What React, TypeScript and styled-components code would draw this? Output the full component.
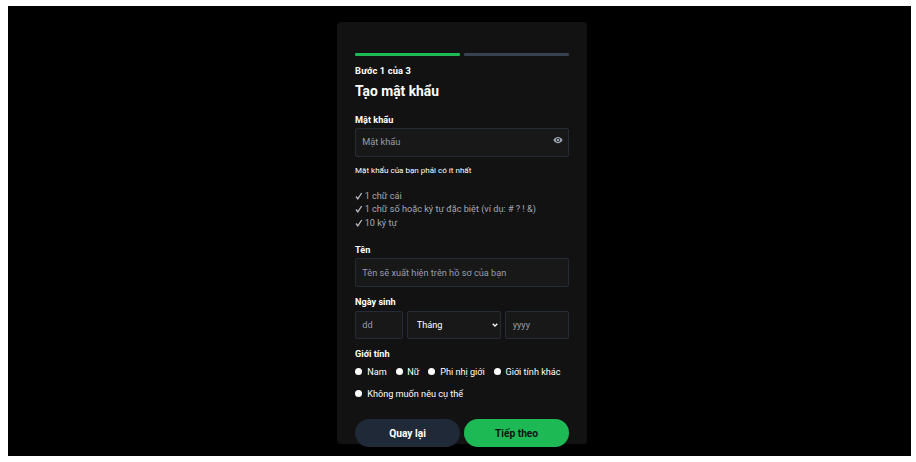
import React from "react";
import styled, { createGlobalStyle } from "styled-components";

const GlobalStyle = createGlobalStyle`
  *, *::before, *::after { box-sizing: border-box; }
  body { margin: 0; background: #fff; font-family: Roboto, sans-serif; }
  input, select, button { font-family: inherit; }
`;

const Frame = styled.div`
  height: 462px;
  padding: 6px 5px 6px 8px;
  overflow: hidden;
`;

const Page = styled.main`
  height: 450px;
  padding: 16px 0 0 329.4px;
  background: #000;
`;

const Card = styled.form`
  display: flex;
  flex-direction: column;
  width: 249.6px;
  height: 421.7px;
  padding: 31px 18px 0 17.7px;
  border-radius: 4px;
  background: #121212;
  color: #fff;
`;

const Progress = styled.div`
  display: grid;
  grid-template-columns: 1fr 1fr;
  gap: 4px;
  flex: none;
`;

const Segment = styled.span<{ $active?: boolean }>`
  height: 2.7px;
  border-radius: 1px;
  background: ${(p) => (p.$active ? "#1db954" : "#374151")};
`;

const Step = styled.p`
  margin: 8.3px 0 0;
  font-size: 9.3px;
  line-height: 14px;
  font-weight: 700;
  letter-spacing: 0.12px;
`;

const Title = styled.h1`
  margin: 3px 0 0;
  font-size: 13.8px;
  line-height: 20px;
  font-weight: 700;
`;

const Group = styled.section<{ $top: number }>`
  display: flex;
  flex-direction: column;
  flex: none;
  margin-top: ${(p) => p.$top}px;
`;

const Label = styled.label`
  font-size: 9.15px;
  line-height: 14px;
  font-weight: 700;
`;

const Field = styled.div`
  display: flex;
  align-items: center;
  height: 28.2px;
  margin-top: 1.9px;
  padding: 0 5px 0 6.2px;
  border: 1px solid #252b37;
  border-radius: 2px;
  background: #181818;
`;

const PasswordField = styled(Field)`
  margin-top: 1.4px;
`;

const Input = styled.input`
  flex: 1;
  min-width: 0;
  width: 100%;
  padding: 0;
  border: 0;
  outline: 0;
  background: transparent;
  color: #fff;
  font-size: 9.2px;
  line-height: 14px;
  &::placeholder { color: #959eac; opacity: 1; }
`;

const EyeIcon = styled.svg`
  width: 10px;
  height: 10px;
  margin-top: -5px;
  fill: #9ca3af;
`;

const Hint = styled.p`
  margin: 7px 0 0;
  font-size: 8.05px;
  line-height: 14px;
  font-weight: 400;
`;

const Rules = styled.ul`
  margin: 11.8px 0 0;
  padding: 0;
  list-style: none;
`;

const Rule = styled.li`
  display: flex;
  align-items: center;
  gap: 1.6px;
  height: 13.35px;
  color: #a3aab5;
  font-size: 9.13px;
`;

const Check = styled.svg`
  width: 8px;
  height: 8px;
  fill: none;
  stroke: #b8bdc6;
  stroke-width: 1.3;
`;

const DateRow = styled.div`
  display: grid;
  grid-template-columns: 48px 93.6px 1fr;
  gap: 4.4px;
`;

const Select = styled.select`
  appearance: none;
  flex: 1;
  min-width: 0;
  padding: 0 0 0 2px;
  border: 0;
  background: transparent;
  color: #fff;
  font-size: 9.2px;
`;

const Chevron = styled.svg`
  width: 6px;
  height: 4px;
  margin-right: -4.5px;
  fill: none;
  stroke: #fff;
  stroke-width: 1.3;
`;

const SelectField = styled(Field)`
  padding-right: 7px;
`;

const Options = styled.div`
  display: flex;
  flex-wrap: wrap;
  margin-top: 3.8px;
  row-gap: 8.1px;
  column-gap: 8.6px;
`;

const Option = styled.label`
  display: flex;
  align-items: center;
  gap: 4.8px;
  height: 14px;
  font-size: 9.15px;
  white-space: nowrap;
`;

const Radio = styled.input`
  appearance: none;
  flex: none;
  width: 7px;
  height: 7px;
  margin: 0 0 0 0.3px;
  border-radius: 50%;
  background: #fff;
`;

const Actions = styled.div`
  display: grid;
  grid-template-columns: 1fr 1fr;
  gap: 4px;
  margin-top: 18px;
`;

const Button = styled.button<{ $primary?: boolean }>`
  height: 28.6px;
  padding: 0;
  border: 0;
  border-radius: 15px;
  background: ${(p) => (p.$primary ? "#1db954" : "#1f2937")};
  color: ${(p) => (p.$primary ? "#121212" : "#fff")};
  font-size: 10.2px;
  font-weight: 700;
`;

const rules = ["1 chữ cái", "1 chữ số hoặc ký tự đặc biệt (ví dụ: # ? ! &)", "10 ký tự"];
const genders = ["Nam", "Nữ", "Phi nhị giới", "Giới tính khác", "Không muốn nêu cụ thể"];

export default function App() {
  return (
    <Frame>
      <GlobalStyle />
      <Page>
        <Card>
          <Progress>
            <Segment $active />
            <Segment />
          </Progress>
          <Step>Bước 1 của 3</Step>
          <Title>Tạo mật khẩu</Title>

          <Group $top={12}>
            <Label>Mật khẩu</Label>
            <PasswordField>
              <Input type="password" placeholder="Mật khẩu" />
              <EyeIcon viewBox="0 0 24 24">
                <path
                  fillRule="evenodd"
                  d="M12 4.5C7 4.5 2.73 7.61 1 12c1.73 4.39 6 7.5 11 7.5s9.27-3.11 11-7.5c-1.73-4.39-6-7.5-11-7.5zM12 17a5 5 0 1 1 0-10 5 5 0 0 1 0 10zm0-8a3 3 0 1 0 0 6 3 3 0 0 0 0-6z"
                />
              </EyeIcon>
            </PasswordField>
            <Hint>Mật khẩu của bạn phải có ít nhất</Hint>
            <Rules>
              {rules.map((rule) => (
                <Rule key={rule}>
                  <Check viewBox="0 0 8 8">
                    <path d="M1 4.5 2.8 6.8 6.7 1" />
                  </Check>
                  {rule}
                </Rule>
              ))}
            </Rules>
          </Group>

          <Group $top={13.2}>
            <Label>Tên</Label>
            <Field>
              <Input placeholder="Tên sẽ xuất hiện trên hồ sơ của bạn" />
            </Field>
          </Group>

          <Group $top={8}>
            <Label>Ngày sinh</Label>
            <DateRow>
              <Field>
                <Input placeholder="dd" />
              </Field>
              <SelectField>
                <Select defaultValue="">
                  <option value="">Tháng</option>
                </Select>
                <Chevron viewBox="0 0 6 4">
                  <path d="M0.7 0.7 3 3 5.3 0.7" />
                </Chevron>
              </SelectField>
              <Field>
                <Input placeholder="yyyy" />
              </Field>
            </DateRow>
          </Group>

          <Group $top={8.2}>
            <Label as="span">Giới tính</Label>
            <Options>
              {genders.map((gender) => (
                <Option key={gender}>
                  <Radio type="radio" name="gender" />
                  {gender}
                </Option>
              ))}
            </Options>
          </Group>

          <Actions>
            <Button type="button">Quay lại</Button>
            <Button type="button" $primary>
              Tiếp theo
            </Button>
          </Actions>
        </Card>
      </Page>
    </Frame>
  );
}
